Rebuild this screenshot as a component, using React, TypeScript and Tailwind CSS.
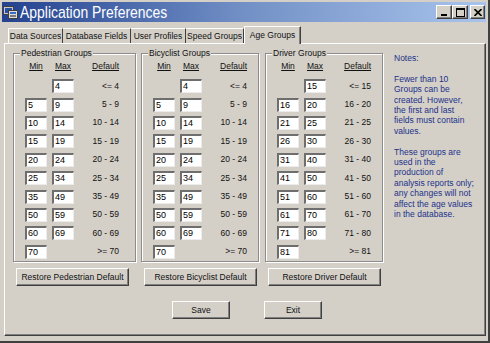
import React from "react";

type Row = [string, string, string];

const makeRows = (ranges: [number | null, number | null][]): Row[] =>
  ranges.map(([lo, hi]) => [
    lo === null ? "" : String(lo),
    hi === null ? "" : String(hi),
    lo === null ? `<= ${hi}` : hi === null ? `>= ${lo}` : `${lo} - ${hi}`,
  ]);

const standard = makeRows([
  [null, 4], [5, 9], [10, 14], [15, 19], [20, 24],
  [25, 34], [35, 49], [50, 59], [60, 69], [70, null],
]);

const driver = makeRows([
  [null, 15], [16, 20], [21, 25], [26, 30], [31, 40],
  [41, 50], [51, 60], [61, 70], [71, 80], [81, null],
]);

const raised =
  "border border-t-white border-l-white border-r-[#404040] border-b-[#404040] bg-[#d4d0c8] shadow-[inset_-1px_-1px_0_#808080]";

const Field = ({ value }: { value: string }) =>
  value ? (
    <div className="h-[14px] w-[22px] border-t-2 border-l-2 border-t-[#6e6e6e] border-l-[#6e6e6e] border-r border-b border-r-[#ececec] border-b-[#ececec] bg-white pl-[1px] text-[9px] leading-[11px] text-black">
      {value}
    </div>
  ) : (
    <div />
  );

const Group = ({
  title,
  rows,
  button,
  className,
}: {
  title: string;
  rows: Row[];
  button: string;
  className: string;
}) => (
  <div className={className}>
    <div className="relative h-[209px] border border-[#8c8c8c] pt-[7px] shadow-[inset_1px_1px_0_#fff,1px_1px_0_#fff]">
      <span className="absolute -top-[6px] left-[6px] bg-[#d4d0c8] px-[1px] leading-[11px]">
        {title}
      </span>
      <div className="grid grid-cols-[22px_22px_40px] gap-x-[5px] pl-[11px] leading-[11px] underline">
        <span className="text-center">Min</span>
        <span className="text-center">Max</span>
        <span className="text-right">Default</span>
      </div>
      <div className="mt-[5px] grid auto-rows-[18.4px] grid-cols-[22px_22px_40px] items-center gap-x-[5px] pl-[11px]">
        {rows.map(([min, max, def], i) => (
          <React.Fragment key={i}>
            <Field value={min} />
            <Field value={max} />
            <span className="text-right leading-[11px]">{def}</span>
          </React.Fragment>
        ))}
      </div>
    </div>
    <button className={`mt-[6px] ml-[3px] h-[18px] w-[113px] ${raised}`}>
      {button}
    </button>
  </div>
);

const App = () => {
  return (
    <div className="flex h-[343px] w-[490px] flex-col overflow-hidden border-r-2 border-b-2 border-r-[#404040] border-b-[#404040] bg-[#d4d0c8] font-['Liberation_Sans',Arial,sans-serif] text-[8.5px] text-[#111]">
      {/* title bar */}
      <div className="mx-[2px] mt-[2px] flex h-[20px] items-center bg-gradient-to-r from-[#24428f] via-[#7390c6] to-[#a8c4ec] pl-[1px] pr-[1px]">
        <svg width="15" height="14" viewBox="0 0 15 14" className="mr-[2px] shrink-0">
          <rect x="0.5" y="1.5" width="10" height="8" fill="#c8c8c8" stroke="#404040" />
          <rect x="2" y="3" width="7" height="5" fill="#2a4fa8" />
          <rect x="5.5" y="5.5" width="9" height="8" fill="#dcdcdc" stroke="#404040" />
          <rect x="7" y="7" width="6" height="2" fill="#3a6ac8" />
          <rect x="7" y="10" width="6" height="2" fill="#7a7a7a" />
        </svg>
        <span className="inline-block origin-left scale-x-[0.82] whitespace-nowrap text-[17px] leading-none text-white">
          Application Preferences
        </span>
        <div className="ml-auto flex items-center">
          <div className={`flex h-[14px] w-[16px] items-end justify-center pb-[2px] ${raised}`}>
            <div className="h-[2px] w-[6px] bg-black" />
          </div>
          <div className={`flex h-[14px] w-[16px] items-center justify-center ${raised}`}>
            <div className="h-[9px] w-[9px] border border-t-2 border-black" />
          </div>
          <div className={`ml-[2px] flex h-[14px] w-[15px] items-center justify-center ${raised}`}>
            <svg width="8" height="7" viewBox="0 0 8 7">
              <path d="M0.5 0 L7.5 7 M7.5 0 L0.5 7" stroke="#000" strokeWidth="1.6" />
            </svg>
          </div>
        </div>
      </div>

      {/* tabs */}
      <div className="mt-[4px] ml-[8px] flex h-[17px] items-end">
        <div className="flex h-[15px] w-[55px] items-center justify-center border-t border-l border-r border-t-white border-l-white border-r-[#404040]">
          Data Sources
        </div>
        <div className="flex h-[15px] w-[68px] items-center justify-center border-t border-r border-t-white border-r-[#404040]">
          Database Fields
        </div>
        <div className="flex h-[15px] w-[55px] items-center justify-center border-t border-r border-t-white border-r-[#404040]">
          User Profiles
        </div>
        <div className="flex h-[15px] w-[58px] items-center justify-center border-t border-r border-t-white border-r-[#404040]">
          Speed Groups
        </div>
        <div className="relative z-10 -mb-px flex h-[18px] w-[57px] items-center justify-center border-t border-l border-r border-t-white border-l-white border-r-[#404040] bg-[#d4d0c8] shadow-[inset_-1px_0_0_#808080]">
          Age Groups
        </div>
      </div>

      {/* panel */}
      <div className="mr-[2px] mb-[5px] ml-[4px] flex flex-1 flex-col border border-t-white border-l-white border-r-[#404040] border-b-[#404040] shadow-[inset_-1px_-1px_0_#808080]">
        <div className="flex pt-[9px] pl-[8px]">
          <Group
            className="w-[123px]"
            title="Pedestrian Groups"
            rows={standard}
            button="Restore Pedestrian Default"
          />
          <Group
            className="ml-[5px] w-[118px]"
            title="Bicyclist Groups"
            rows={standard}
            button="Restore Bicyclist Default"
          />
          <Group
            className="ml-[6px] w-[118px]"
            title="Driver Groups"
            rows={driver}
            button="Restore Driver Default"
          />
          <div className="ml-[11px] text-[8.5px] leading-[10.4px] text-[#22308a]">
            Notes:
            <br />
            <br />
            Fewer than 10
            <br />
            Groups can be
            <br />
            created. However,
            <br />
            the first and last
            <br />
            fields must contain
            <br />
            values.
            <br />
            <br />
            These groups are
            <br />
            used in the
            <br />
            production of
            <br />
            analysis reports only;
            <br />
            any changes will not
            <br />
            affect the age values
            <br />
            in the database.
          </div>
        </div>
        <div className="mt-[15px] flex gap-[34px] pl-[167px]">
          <button className={`h-[18px] w-[58px] ${raised}`}>Save</button>
          <button className={`h-[18px] w-[58px] ${raised}`}>Exit</button>
        </div>
      </div>
    </div>
  );
};

export default App;
